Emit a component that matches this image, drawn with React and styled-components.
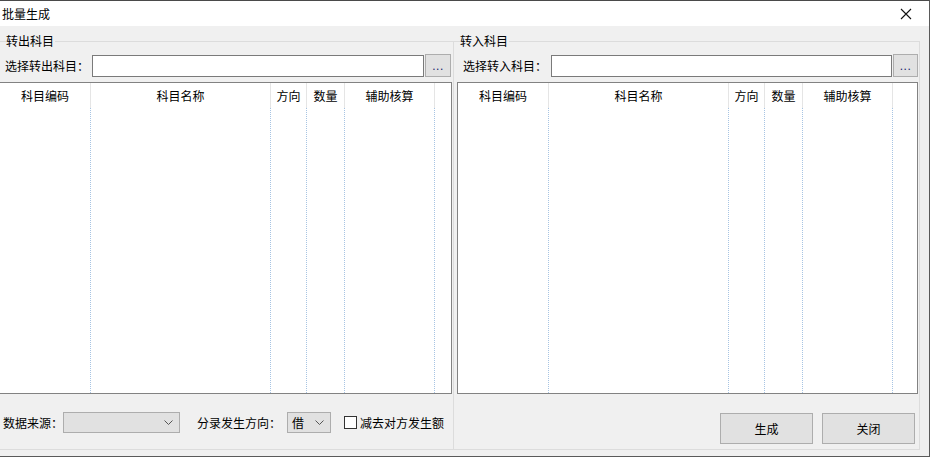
import React from 'react';
import styled, { createGlobalStyle } from 'styled-components';

const GlobalStyle = createGlobalStyle`
  html, body { margin: 0; padding: 0; background: #ffffff; }
  body {
    font-family: "Noto Sans CJK SC", "Liberation Sans", sans-serif;
    font-size: 12px;
    color: #000;
  }
`;

const columns = [
  { title: '科目编码', width: 91 },
  { title: '科目名称', width: 180 },
  { title: '方向', width: 36 },
  { title: '数量', width: 38 },
  { title: '辅助核算', width: 90 },
  { title: '', width: 0 },
];

const Window = styled.div`
  width: 930px;
  height: 457px;
  box-sizing: border-box;
  border-top: 1px solid #4a4a4a;
  border-right: 1px solid #5a5a5a;
  border-bottom: 1px solid #5a5a5a;
  display: flex;
  flex-direction: column;
  background: #f0f0f0;
`;

const TitleBar = styled.div`
  height: 25px;
  flex: none;
  background: #fff;
  display: flex;
  align-items: center;
  justify-content: space-between;
  padding: 0 17px 0 2px;
  font-size: 12px;
  line-height: 1;
`;

const CloseIcon = styled.svg`
  width: 12px;
  height: 12px;
  display: block;
`;

const Body = styled.div`
  flex: 1;
  display: flex;
  padding-top: 15px;
`;

const Group = styled.div`
  position: relative;
  box-sizing: border-box;
  width: ${p => p.$width}px;
  height: 409px;
  border-top: 1px solid #dcdcdc;
  border-right: 1px solid #dcdcdc;
  border-bottom: 1px solid #dcdcdc;
  display: flex;
  flex-direction: column;
  padding-left: ${p => p.$pad}px;
`;

const Legend = styled.span`
  position: absolute;
  left: 6px;
  top: -9px;
  background: #f0f0f0;
  line-height: 16px;
  padding-right: 1px;
`;

const PickRow = styled.div`
  display: flex;
  align-items: center;
  height: 23px;
  margin-top: 12px;
  padding-left: ${p => p.$labelPad}px;
`;

const Label = styled.span`
  white-space: nowrap;
  line-height: 1;
`;

const TextBox = styled.div`
  box-sizing: border-box;
  height: 22px;
  width: ${p => p.$width}px;
  margin-left: ${p => p.$gap}px;
  border: 1px solid #7a7a7a;
  background: #fff;
`;

const DotsButton = styled.div`
  box-sizing: border-box;
  width: ${p => p.$width}px;
  height: 23px;
  margin-left: 1px;
  border: 1px solid #adadad;
  background: #e1e1e1;
  display: flex;
  align-items: flex-end;
  justify-content: center;
  padding-bottom: 4px;
  color: #1a1a6a;
  font-family: "Liberation Sans", sans-serif;
  font-size: 12px;
  line-height: 1;
  letter-spacing: 0.5px;
`;

const Grid = styled.div`
  box-sizing: border-box;
  margin-top: 5px;
  margin-left: ${p => p.$offset}px;
  width: ${p => p.$width}px;
  height: 312px;
  background: #fff;
  border: 1px solid #828282;
  ${p => p.$noLeft && 'border-left: none;'}
  display: flex;
`;

const Column = styled.div`
  box-sizing: border-box;
  display: flex;
  flex-direction: column;
  ${p => (p.$width ? `width: ${p.$width}px; flex: none;` : 'flex: 1;')}
`;

const HeaderCell = styled.div`
  box-sizing: border-box;
  height: 25px;
  flex: none;
  display: flex;
  align-items: center;
  justify-content: center;
  border-right: ${p => (p.$last ? 'none' : '1px solid #e5e5e5')};
  line-height: 1;
  padding-top: 1px;
`;

const BodyCell = styled.div`
  flex: 1;
  box-sizing: border-box;
  border-right: ${p => (p.$last ? 'none' : '1px dotted #a7c4e3')};
`;

const Footer = styled.div`
  flex: 1;
  display: flex;
  align-items: flex-start;
  padding-top: ${p => p.$top}px;
  padding-left: ${p => p.$left}px;
  justify-content: ${p => p.$justify || 'flex-start'};
  padding-right: ${p => p.$right || 0}px;
`;

const ComboBox = styled.div`
  box-sizing: border-box;
  width: ${p => p.$width}px;
  height: 21px;
  margin-left: ${p => p.$gap}px;
  border: 1px solid #adadad;
  background: #e1e1e1;
  display: flex;
  align-items: center;
  justify-content: space-between;
  padding: 0 6px 0 4px;
  line-height: 1;
`;

const Chevron = styled.svg`
  width: 9px;
  height: 5px;
  display: block;
`;

const FooterItem = styled.div`
  display: flex;
  align-items: center;
  height: 21px;
  margin-left: ${p => p.$gap || 0}px;
`;

const CheckBox = styled.span`
  box-sizing: border-box;
  width: 13px;
  height: 13px;
  border: 1px solid #333;
  background: #fff;
  margin-right: 3px;
`;

const PushButton = styled.div`
  box-sizing: border-box;
  width: 93px;
  height: 31px;
  border: 1px solid #adadad;
  background: #e1e1e1;
  display: flex;
  align-items: center;
  justify-content: center;
  margin-left: ${p => p.$gap || 0}px;
  line-height: 1;
`;

function Table({ width, offset, noLeft }) {
  return (
    <Grid $width={width} $offset={offset} $noLeft={noLeft}>
      {columns.map((c, i) => {
        const last = i === columns.length - 1;
        return (
          <Column key={i} $width={c.width}>
            <HeaderCell $last={last}>{c.title}</HeaderCell>
            <BodyCell $last={last} />
          </Column>
        );
      })}
    </Grid>
  );
}

function ChevronDown() {
  return (
    <Chevron viewBox="0 0 9 5">
      <path d="M0.5 0.5 L4.5 4.5 L8.5 0.5" fill="none" stroke="#555" strokeWidth="1" />
    </Chevron>
  );
}

export default function App() {
  return (
    <>
      <GlobalStyle />
      <Window>
        <TitleBar>
          <span>批量生成</span>
          <CloseIcon viewBox="0 0 12 12">
            <path d="M1 1 L11 11 M11 1 L1 11" stroke="#111" strokeWidth="1.1" fill="none" />
          </CloseIcon>
        </TitleBar>
        <Body>
          <Group $width={454} $pad={0}>
            <Legend>转出科目</Legend>
            <PickRow $labelPad={5}>
              <Label>选择转出科目：</Label>
              <TextBox $width={332} $gap={3} />
              <DotsButton $width={26}>...</DotsButton>
            </PickRow>
            <Table width={452} offset={0} noLeft />
            <Footer $top={18} $left={3}>
              <FooterItem>数据来源：</FooterItem>
              <ComboBox $width={117} $gap={0}>
                <span />
                <ChevronDown />
              </ComboBox>
              <FooterItem $gap={17}>分录发生方向：</FooterItem>
              <ComboBox $width={44} $gap={6}>
                <span>借</span>
                <ChevronDown />
              </ComboBox>
              <FooterItem $gap={13}>
                <CheckBox />
                减去对方发生额
              </FooterItem>
            </Footer>
          </Group>
          <Group $width={466} $pad={0}>
            <Legend>转入科目</Legend>
            <PickRow $labelPad={9}>
              <Label>选择转入科目：</Label>
              <TextBox $width={341} $gap={4} />
              <DotsButton $width={25}>...</DotsButton>
            </PickRow>
            <Table width={461} offset={3} />
            <Footer $top={19} $left={0} $justify="flex-end" $right={4}>
              <PushButton>生成</PushButton>
              <PushButton $gap={9}>关闭</PushButton>
            </Footer>
          </Group>
        </Body>
      </Window>
    </>
  );
}
